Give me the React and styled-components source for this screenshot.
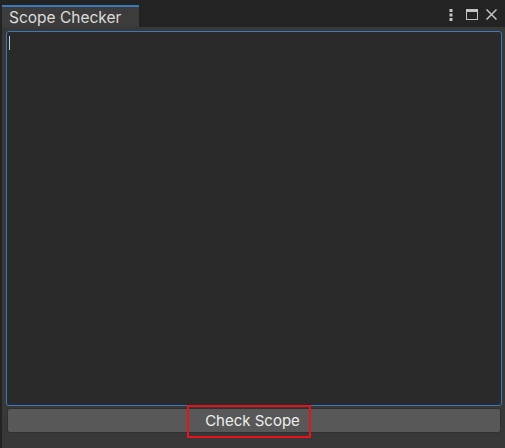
import React from 'react';
import styled, { createGlobalStyle } from 'styled-components';

const GlobalStyle = createGlobalStyle`
  html, body {
    margin: 0;
    padding: 0;
    background: #383838;
  }
  body {
    font-family: Inter, "Noto Sans", "Liberation Sans", sans-serif;
  }
`;

const Window = styled.div`
  width: 505px;
  height: 448px;
  display: flex;
  flex-direction: column;
  background: #383838;
  border-left: 2px solid #232323;
  box-sizing: border-box;
  overflow: hidden;
`;

const TabBar = styled.div`
  height: 27px;
  display: flex;
  align-items: flex-end;
  background: #232323;
  flex-shrink: 0;
`;

const Tab = styled.div`
  width: 130px;
  height: 20px;
  background: #3c3c3c;
  border-top: 2px solid #3a79bb;
  color: #dcdcdc;
  font-size: 15.5px;
  line-height: 21px;
  padding-left: 7px;
  box-sizing: content-box;
  white-space: nowrap;
`;

const TabSpacer = styled.div`
  flex: 1;
`;

const TabTools = styled.div`
  align-self: center;
  display: flex;
  align-items: center;
  padding-right: 8px;
  margin-top: 2px;
  color: #c4c4c4;
`;

const ToolIcon = styled.svg`
  display: block;
  margin-left: ${p => p.$gap || 0}px;
`;

const Body = styled.div`
  flex: 1;
  display: flex;
  flex-direction: column;
  padding: 4px 3px 0 4px;
  gap: 2px;
`;

const Editor = styled.div`
  height: 375px;
  background: #2a2a2a;
  border: 1px solid #3a79bb;
  border-radius: 3px;
  padding: 4px 2px;
  box-sizing: border-box;
`;

const Caret = styled.div`
  width: 1px;
  height: 14px;
  background: #c8c8c8;
`;

const ButtonRow = styled.div`
  position: relative;
  padding: 0 1px;
`;

const Button = styled.button`
  width: 100%;
  height: 25px;
  background: #585858;
  border: 1px solid #303030;
  border-radius: 3px;
  color: #eeeeee;
  font-family: inherit;
  font-size: 15px;
  padding: 0 3px 0 0;
  display: flex;
  align-items: center;
  justify-content: center;
`;

const Highlight = styled.div`
  position: absolute;
  left: 181px;
  top: -3px;
  width: 124px;
  height: 33px;
  border: 2px solid #e5141c;
  box-sizing: border-box;
  pointer-events: none;
`;

function MenuIcon() {
  return (
    <ToolIcon width="4" height="12" viewBox="0 0 4 12">
      <rect x="0.5" y="0" width="3" height="3" fill="currentColor" />
      <rect x="0.5" y="4.5" width="3" height="3" fill="currentColor" />
      <rect x="0.5" y="9" width="3" height="3" fill="currentColor" />
    </ToolIcon>
  );
}

function MaximizeIcon() {
  return (
    <ToolIcon $gap={13} width="12" height="11" viewBox="0 0 12 11">
      <rect x="0.5" y="0.5" width="11" height="10" fill="none" stroke="currentColor" strokeWidth="1" />
      <rect x="0.5" y="0.5" width="11" height="2.5" fill="currentColor" />
    </ToolIcon>
  );
}

function CloseIcon() {
  return (
    <ToolIcon $gap={8} width="11" height="11" viewBox="0 0 11 11">
      <path d="M0.5 0.5 L10.5 10.5 M10.5 0.5 L0.5 10.5" stroke="currentColor" strokeWidth="1.5" />
    </ToolIcon>
  );
}

export default function App() {
  return (
    <Window>
      <GlobalStyle />
      <TabBar>
        <Tab>Scope Checker</Tab>
        <TabSpacer />
        <TabTools>
          <MenuIcon />
          <MaximizeIcon />
          <CloseIcon />
        </TabTools>
      </TabBar>
      <Body>
        <Editor>
          <Caret />
        </Editor>
        <ButtonRow>
          <Button>Check Scope</Button>
          <Highlight />
        </ButtonRow>
      </Body>
    </Window>
  );
}
